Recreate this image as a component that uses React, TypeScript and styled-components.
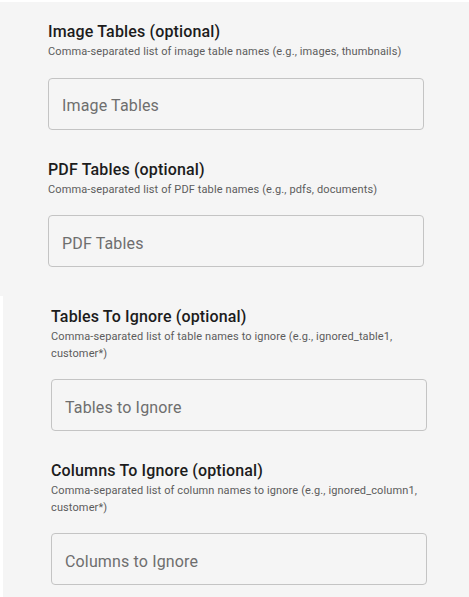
import React from "react";
import styled, {createGlobalStyle} from "styled-components";

const GlobalStyle = createGlobalStyle`
  body {
    margin: 0;
    background: #ffffff;
    font-family: Roboto, "Liberation Sans", sans-serif;
  }
`

const Panel = styled.div<{shift: number; top: number; height: number}>`
  margin-left: ${props => props.shift}px;
  margin-top: ${props => (props.shift ? 0 : 2)}px;
  height: ${props => props.height}px;
  box-sizing: border-box;
  padding: ${props => props.top}px 0 0 48px;
  background: #f5f5f5;
  display: flex;
  flex-direction: column;
  gap: 30px;
`

const Field = styled.div`
  display: flex;
  flex-direction: column;
  width: 376px;
`

const Title = styled.h3`
  margin: 0;
  font-size: 16px;
  line-height: 20px;
  font-weight: 500;
  letter-spacing: 0.15px;
  color: #1c1c1c;
`

const Hint = styled.p`
  margin: 2px 0 0;
  font-size: 11px;
  line-height: 16.5px;
  letter-spacing: 0.12px;
  color: #5c5c5c;
`

const Input = styled.input`
  margin-top: 17px;
  height: 52px;
  box-sizing: border-box;
  border: 1px solid #c4c4c4;
  border-radius: 4px;
  padding: 4px 13px 0;
  background: transparent;
  font-family: Roboto, "Liberation Sans", sans-serif;
  font-size: 16px;
  letter-spacing: 0.15px;
  color: #222;
  outline: none;

  &::placeholder {
    color: #6e6e6e;
  }
`

type FieldInfo = {
    title: string;
    hint: string;
    placeholder: string;
}

const topFields: FieldInfo[] = [
    {title: "Image Tables (optional)", hint: "Comma-separated list of image table names (e.g., images, thumbnails)", placeholder: "Image Tables"},
    {title: "PDF Tables (optional)", hint: "Comma-separated list of PDF table names (e.g., pdfs, documents)", placeholder: "PDF Tables"},
]

const bottomFields: FieldInfo[] = [
    {title: "Tables To Ignore (optional)", hint: "Comma-separated list of table names to ignore (e.g., ignored_table1, customer*)", placeholder: "Tables to Ignore"},
    {title: "Columns To Ignore (optional)", hint: "Comma-separated list of column names to ignore (e.g., ignored_column1, customer*)", placeholder: "Columns to Ignore"},
]

const renderField = (f: FieldInfo) => (
    <Field key={f.title}>
        <Title>{f.title}</Title>
        <Hint>{f.hint}</Hint>
        <Input placeholder={f.placeholder}/>
    </Field>
)

const App = () => {
    return (
        <>
            <GlobalStyle/>
            <Panel shift={0} top={20} height={294}>
                {topFields.map(renderField)}
            </Panel>
            <Panel shift={3} top={11} height={301}>
                {bottomFields.map(renderField)}
            </Panel>
        </>
    )
}

export default App;
